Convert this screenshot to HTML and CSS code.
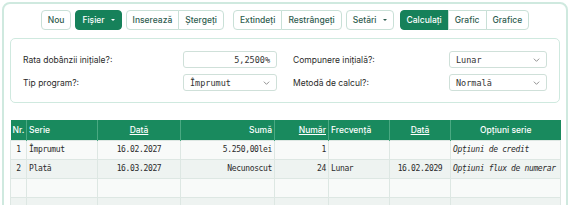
FILE: index.html
```html
<!DOCTYPE html>
<html lang="ro">
<head>
<meta charset="utf-8">
<title>Calculator</title>
<link rel="stylesheet" href="styles.css">
</head>
<body>
<div class="app">
  <div class="toolbar">
    <button class="btn">Nou</button>
    <button class="btn primary sp1">Fișier <span class="caret"></span></button>
    <div class="group">
      <button class="btn">Inserează</button><button class="btn">Ștergeți</button>
    </div>
    <div class="group sp5">
      <button class="btn">Extindeți</button><button class="btn">Restrângeți</button>
    </div>
    <button class="btn sp4">Setări <span class="caret dark"></span></button>
    <div class="group sp2">
      <button class="btn primary">Calculați</button><button class="btn">Grafic</button><button class="btn">Grafice</button>
    </div>
  </div>

  <div class="panel">
    <div class="field">
      <span class="label">Rata dobânzii inițiale?:</span>
      <div class="control input narrow">5,2500%</div>
    </div>
    <div class="field">
      <span class="label">Compunere inițială?:</span>
      <div class="control select wide">Lunar<svg class="chev" viewBox="0 0 10 6"><path d="M1 1l4 4 4-4" /></svg></div>
    </div>
    <div class="field">
      <span class="label">Tip program?:</span>
      <div class="control select narrow">Împrumut<svg class="chev" viewBox="0 0 10 6"><path d="M1 1l4 4 4-4" /></svg></div>
    </div>
    <div class="field">
      <span class="label">Metodă de calcul?:</span>
      <div class="control select wide">Normală<svg class="chev" viewBox="0 0 10 6"><path d="M1 1l4 4 4-4" /></svg></div>
    </div>
  </div>

  <table class="grid">
    <colgroup>
      <col class="c-nr"><col class="c-serie"><col class="c-data"><col class="c-suma"><col class="c-numar"><col class="c-frec"><col class="c-data2"><col class="c-opt">
    </colgroup>
    <thead>
      <tr>
        <th class="l">Nr.</th>
        <th class="l">Serie</th>
        <th class="c"><u>Dată</u></th>
        <th class="r">Sumă</th>
        <th class="r"><u>Număr</u></th>
        <th class="l">Frecvență</th>
        <th class="c"><u>Dată</u></th>
        <th class="c">Opțiuni serie</th>
      </tr>
    </thead>
    <tbody>
      <tr>
        <td class="c">1</td>
        <td class="l">Împrumut</td>
        <td class="c">16.02.2027</td>
        <td class="r">5.250,00lei</td>
        <td class="r">1</td>
        <td class="l"></td>
        <td class="c"></td>
        <td class="l it">Opțiuni de credit</td>
      </tr>
      <tr class="alt">
        <td class="c">2</td>
        <td class="l">Plată</td>
        <td class="c">16.03.2027</td>
        <td class="r">Necunoscut</td>
        <td class="r">24</td>
        <td class="l">Lunar</td>
        <td class="c">16.02.2029</td>
        <td class="l it">Opțiuni flux de numerar</td>
      </tr>
      <tr class="empty">
        <td></td><td></td><td></td><td></td><td></td><td></td><td></td><td></td>
      </tr>
      <tr class="empty alt">
        <td></td><td></td><td></td><td></td><td></td><td></td><td></td><td></td>
      </tr>
    </tbody>
  </table>
</div>
</body>
</html>
```

FILE: styles.css
```css
html, body {
  margin: 0;
  padding: 0;
  background: #ffffff;
}
body {
  font-family: Inter, "Noto Sans", sans-serif;
  color: #222;
  overflow: hidden;
  height: 205px;
}
.app {
  margin: 2px 2px 0 2px;
  border: 2px solid #cfe9df;
  border-radius: 8px;
  padding: 6px 6px 20px 6px;
  height: 240px;
  box-sizing: border-box;
}
.toolbar {
  display: flex;
  justify-content: center;
  align-items: center;
  gap: 4px;
}
.sp1 { margin-left: 1px; }
.sp2 { margin-left: 2px; }
.sp4 { margin-left: 4px; }
.sp5 { margin-left: 5px; }
.group {
  display: flex;
}
.btn {
  font-family: Inter, "Noto Sans", sans-serif;
  font-size: 8.5px;
  font-weight: 500;
  color: #2f5d50;
  background: #fff;
  border: 1px solid #c9e0d7;
  border-radius: 4px;
  height: 20px;
  padding: 0 6px;
  margin: 0;
  display: flex;
  align-items: center;
  gap: 6px;
  line-height: 1;
}
.group .btn { border-radius: 0; margin-left: -1px; }
.group .btn:first-child { border-radius: 4px 0 0 4px; margin-left: 0; }
.group .btn:last-child { border-radius: 0 4px 4px 0; }
.btn.primary {
  background: #16815a;
  border-color: #16815a;
  color: #fff;
}
.caret {
  display: inline-block;
  width: 0;
  height: 0;
  border-left: 2px solid transparent;
  border-right: 2px solid transparent;
  border-top: 2.5px solid #fff;
}
.caret.dark { border-top-color: #2f5d50; }

.panel {
  margin-top: 8px;
  border: 1px solid #cfe9df;
  border-radius: 5px;
  padding: 12px 12px 11px 12px;
  display: grid;
  grid-template-columns: 1fr 1fr;
  column-gap: 16px;
  row-gap: 6px;
}
.field {
  display: flex;
  align-items: center;
  justify-content: space-between;
}
.label {
  font-size: 8.5px;
  color: #2a2a2a;
}
.control {
  box-sizing: border-box;
  height: 17px;
  border: 1px solid #cfe0d9;
  border-radius: 3px;
  font-family: "DejaVu Sans Mono", monospace;
  font-size: 8.5px;
  color: #333;
  display: flex;
  align-items: center;
  padding: 0 6px;
}
.control.narrow { width: 94px; }
.control.wide { width: 98px; }
.control.input { justify-content: flex-end; }
.control.select { justify-content: space-between; }
.chev {
  width: 7px;
  height: 4px;
  fill: none;
  stroke: #777;
  stroke-width: 1.2;
}

.grid {
  margin-top: 17px;
  width: 550px;
  border-collapse: collapse;
  table-layout: fixed;
}
.c-nr { width: 16px; }
.c-serie { width: 71px; }
.c-data { width: 83px; }
.c-suma { width: 94px; }
.c-numar { width: 54px; }
.c-frec { width: 61px; }
.c-data2 { width: 61px; }
.c-opt { width: 110px; }
.grid th {
  background: #198a5e;
  color: #fff;
  font-family: Inter, "Noto Sans", sans-serif;
  font-size: 8.5px;
  font-weight: 500;
  height: 20px;
  padding: 0 2px;
  border-left: 1px solid #4aa982;
  box-sizing: border-box;
  white-space: nowrap;
}
.grid th:first-child { border-left: none; }
.grid td {
  font-family: "DejaVu Sans Mono", monospace;
  font-size: 8px;
  letter-spacing: -0.35px;
  color: #2a2a2a;
  height: 18px;
  padding: 0 2px;
  border: 1px solid #dde7e3;
  background: #f8faf9;
  white-space: nowrap;
  overflow: hidden;
}
.grid tr.alt td { background: #eef3f1; }
.grid .l { text-align: left; }
.grid .c { text-align: center; }
.grid .r { text-align: right; }
.grid .it { font-style: italic; }
```
